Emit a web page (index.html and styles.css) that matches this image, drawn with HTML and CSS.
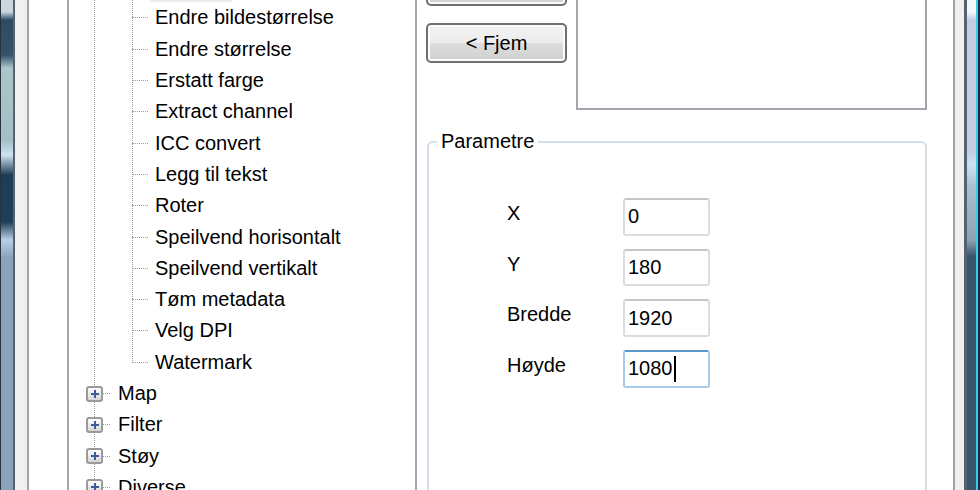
FILE: index.html
```html
<!DOCTYPE html>
<html lang="no">
<head>
    <meta charset="UTF-8">
    <meta name="viewport" content="width=device-width, initial-scale=1.0">
    <link rel="stylesheet" href="styles.css">
    <title>Bildebehandling</title>
</head>
<body>
    <div class="window">
        <div class="frame frame-left">
            <div class="glass"></div>
            <div class="rim"></div>
        </div>

        <div class="dialog">
            <div class="tree">
                <ul class="tree-root">
                    <li>
                        <ul class="tree-children">
                            <li class="node selected"><span class="stub"></span><span class="label">Beskjær</span></li>
                            <li class="node"><span class="stub"></span><span class="label">Endre bildestørrelse</span></li>
                            <li class="node"><span class="stub"></span><span class="label">Endre størrelse</span></li>
                            <li class="node"><span class="stub"></span><span class="label">Erstatt farge</span></li>
                            <li class="node"><span class="stub"></span><span class="label">Extract channel</span></li>
                            <li class="node"><span class="stub"></span><span class="label">ICC convert</span></li>
                            <li class="node"><span class="stub"></span><span class="label">Legg til tekst</span></li>
                            <li class="node"><span class="stub"></span><span class="label">Roter</span></li>
                            <li class="node"><span class="stub"></span><span class="label">Speilvend horisontalt</span></li>
                            <li class="node"><span class="stub"></span><span class="label">Speilvend vertikalt</span></li>
                            <li class="node"><span class="stub"></span><span class="label">Tøm metadata</span></li>
                            <li class="node"><span class="stub"></span><span class="label">Velg DPI</span></li>
                            <li class="node"><span class="stub"></span><span class="label">Watermark</span></li>
                        </ul>
                    </li>
                    <li class="node root-node"><span class="expander"></span><span class="stub"></span><span class="label">Map</span></li>
                    <li class="node root-node"><span class="expander"></span><span class="stub"></span><span class="label">Filter</span></li>
                    <li class="node root-node"><span class="expander"></span><span class="stub"></span><span class="label">Støy</span></li>
                    <li class="node root-node"><span class="expander"></span><span class="stub"></span><span class="label">Diverse</span></li>
                </ul>
            </div>

            <div class="side">
                <div class="top-row">
                    <div class="buttons">
                        <button type="button" class="btn">Legg til &gt;</button>
                        <button type="button" class="btn">&lt; Fjem</button>
                    </div>
                    <div class="listbox"></div>
                </div>

                <fieldset class="params">
                    <legend>Parametre</legend>
                    <div class="param-grid">
                        <span class="param-label">X</span>
                        <span class="textbox">0</span>
                        <span class="param-label">Y</span>
                        <span class="textbox">180</span>
                        <span class="param-label">Bredde</span>
                        <span class="textbox">1920</span>
                        <span class="param-label">Høyde</span>
                        <span class="textbox focused">1080<span class="caret"></span></span>
                    </div>
                </fieldset>
            </div>
        </div>

        <div class="frame frame-right">
            <div class="rim"></div>
            <div class="glass"></div>
        </div>
    </div>
</body>
</html>
```

FILE: styles.css
```css
body {
  margin: 0;
  height: 490px;
  overflow: hidden;
  background: #fff;
  font-family: "Liberation Sans", Arial, sans-serif;
  font-size: 20px;
  color: #000;
}

.window {
  display: flex;
  height: 490px;
}

/* window frame (vista glass) */
.frame {
  display: flex;
  flex-shrink: 0;
}

.frame-left .glass {
  width: 12px;
  border-left: 1px solid #2a3440;
  border-right: 2px solid #56636f;
  background: linear-gradient(to bottom,
    #c9d6de 0, #c9d6de 12px, #2c4a60 20px, #34526a 55px, #a9c6c8 68px,
    #a3bfc4 140px, #cde2f2 155px, #1d3c55 175px, #1f3f58 222px,
    #b7d0e6 240px, #8aa3b9 258px, #8aa3b9 490px);
}

.frame-left .rim {
  width: 12px;
  background: #f0f0f0;
  border-right: 2px solid #a2a2a2;
}

.frame-right {
  border-right: 2px solid #1c2a35;
}

.frame-right .rim {
  width: 9px;
  background: #f0f0f0;
  border-left: 2px solid #a2a2a2;
}

.frame-right .glass {
  width: 9px;
  border-left: 3px solid #56636e;
  border-right: 2px solid #3fc8ea;
  background: linear-gradient(to bottom,
    #f4f6f8 0, #f4f6f8 12px, #c4cce0 20px, #c6cde0 150px, #c9e2f3 165px,
    #a9c0d2 187px, #8ea2b4 240px, #3b566a 256px, #3b566a 490px);
}

/* dialog body */
.dialog {
  flex: 1;
  display: flex;
  padding-left: 38px;
  background: #fff;
}

/* tree view */
.tree {
  width: 346px;
  flex-shrink: 0;
  border-left: 2px solid #a3a7ad;
  border-right: 2px solid #a3a7ad;
}

.tree ul {
  list-style: none;
  margin: 0;
  padding: 0;
  position: relative;
}

.tree-root {
  margin-top: -29px !important;
}

.tree-root::before {
  content: "";
  position: absolute;
  left: 25px;
  top: 0;
  bottom: -40px;
  border-left: 1px dotted #9c9c9c;
}

.tree-children::before {
  content: "";
  position: absolute;
  left: 63px;
  top: 0;
  bottom: 15px;
  border-left: 1px dotted #9c9c9c;
}

.node {
  display: flex;
  align-items: center;
  height: 31.3px;
}

.node .stub {
  margin-left: 63px;
  width: 16px;
  border-top: 1px dotted #9c9c9c;
}

.node .label {
  margin-left: 2px;
  padding: 0 5px;
  line-height: 31px;
  white-space: nowrap;
}

.selected .label {
  background: #ececec;
  border-radius: 2px;
}

.root-node .expander {
  position: relative;
  z-index: 1;
  box-sizing: border-box;
  width: 17px;
  height: 16px;
  margin-left: 17px;
  border: 2px solid #9a9a9a;
  border-radius: 3px;
  background:
    linear-gradient(#3f5c9a, #3f5c9a) center / 8px 2px no-repeat,
    linear-gradient(#3f5c9a, #3f5c9a) center / 2px 8px no-repeat,
    linear-gradient(#ffffff, #d6d6d6);
}

.root-node .stub {
  margin-left: 0;
  width: 7px;
}

.root-node .label {
  margin-left: 3px;
}

/* right side */
.side {
  width: 501px;
  margin-left: 9px;
  flex-shrink: 0;
}

.top-row {
  display: flex;
  margin-top: -40px;
  height: 150px;
}

.buttons {
  display: flex;
  flex-direction: column;
  gap: 17px;
  padding-top: 6px;
}

.btn {
  width: 141px;
  height: 40px;
  border: 2px solid #707070;
  border-radius: 5px;
  background: linear-gradient(#f3f3f3 0%, #ececec 50%, #dedede 50%, #d0d0d0 100%);
  box-shadow: inset 0 0 0 2px #fbfbfb;
  font-family: "Liberation Sans", Arial, sans-serif;
  font-size: 20px;
  color: #000;
  padding: 0;
}

.listbox {
  box-sizing: border-box;
  width: 351px;
  height: 150px;
  margin-left: 9px;
  border: 2px solid #a3a7ad;
  border-top: none;
  background: #fff;
}

/* group box */
.params {
  margin: 20px 0 0 1px;
  width: 500px;
  height: 420px;
  box-sizing: border-box;
  padding: 45px 0 0 0;
  border: 2px solid #d5dfe5;
  border-radius: 6px;
}

.params legend {
  margin-left: 8px;
  padding: 0 4px;
  line-height: 23px;
}

.param-grid {
  display: grid;
  grid-template-columns: 116px 87px;
  grid-auto-rows: 37.7px;
  row-gap: 13px;
  padding-left: 78px;
}

.param-label {
  line-height: 23px;
  padding-top: 4px;
}

.textbox {
  box-sizing: border-box;
  display: flex;
  align-items: center;
  padding-left: 3px;
  border: 2px solid #dadcdf;
  border-top-color: #c3c6ca;
  border-radius: 3px;
  background: #fff;
}

.textbox.focused {
  border-color: #a9cbe9;
  border-top-color: #5d97c9;
}

.caret {
  display: inline-block;
  width: 2px;
  height: 26px;
  margin-left: 1px;
  background: #000;
}
```
